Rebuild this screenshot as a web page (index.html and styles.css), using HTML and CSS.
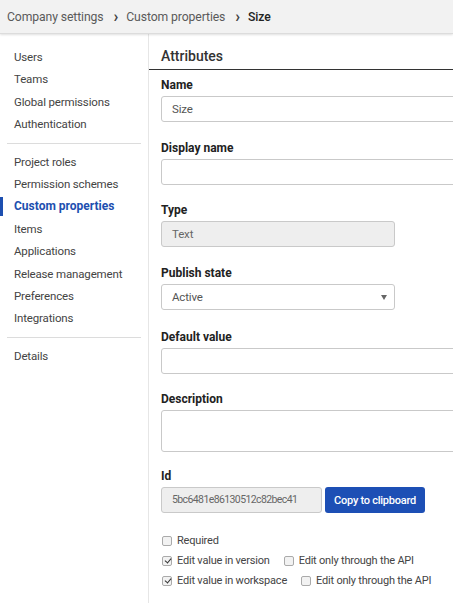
FILE: index.html
```html
<!DOCTYPE html>
<html>
<head>
<meta charset="utf-8">
<link rel="stylesheet" href="styles.css">
</head>
<body>
<header class="crumbs">
  <span class="crumb">Company settings</span>
  <span class="sep">&#x203A;</span>
  <span class="crumb">Custom properties</span>
  <span class="sep">&#x203A;</span>
  <span class="crumb current">Size</span>
</header>
<div class="layout">
  <nav class="sidebar">
    <div class="nav-group">
      <div class="nav-item">Users</div>
      <div class="nav-item">Teams</div>
      <div class="nav-item">Global permissions</div>
      <div class="nav-item">Authentication</div>
    </div>
    <div class="nav-divider"></div>
    <div class="nav-group">
      <div class="nav-item">Project roles</div>
      <div class="nav-item">Permission schemes</div>
      <div class="nav-item active">Custom properties</div>
      <div class="nav-item">Items</div>
      <div class="nav-item">Applications</div>
      <div class="nav-item">Release management</div>
      <div class="nav-item">Preferences</div>
      <div class="nav-item">Integrations</div>
    </div>
    <div class="nav-divider"></div>
    <div class="nav-group">
      <div class="nav-item">Details</div>
    </div>
  </nav>
  <main class="main">
    <h2 class="section-title">Attributes</h2>
    <div class="form">
      <div class="field">
        <label class="label">Name</label>
        <div class="input wide">Size</div>
      </div>
      <div class="field">
        <label class="label">Display name</label>
        <div class="input wide"></div>
      </div>
      <div class="field">
        <label class="label">Type</label>
        <div class="input medium disabled">Text</div>
      </div>
      <div class="field field-select">
        <label class="label">Publish state</label>
        <div class="input medium select">Active<span class="caret"></span></div>
      </div>
      <div class="field field-tight">
        <label class="label">Default value</label>
        <div class="input wide"></div>
      </div>
      <div class="field field-tight">
        <label class="label">Description</label>
        <div class="input wide textarea"></div>
      </div>
      <div class="field">
        <label class="label">Id</label>
        <div class="id-row">
          <div class="input id disabled">5bc6481e86130512c82bec41</div>
          <button class="btn">Copy to clipboard</button>
        </div>
      </div>
      <div class="checks">
        <div class="check-row">
          <span class="check"><span class="box"></span>Required</span>
        </div>
        <div class="check-row">
          <span class="check"><span class="box checked"></span>Edit value in version</span>
          <span class="check"><span class="box"></span>Edit only through the API</span>
        </div>
        <div class="check-row">
          <span class="check"><span class="box checked"></span>Edit value in workspace</span>
          <span class="check"><span class="box"></span>Edit only through the API</span>
        </div>
      </div>
    </div>
  </main>
</div>
</body>
</html>
```

FILE: styles.css
```css
* { box-sizing: border-box; }
html, body { margin: 0; padding: 0; }
body {
  font-family: Roboto, "Noto Sans", "Liberation Sans", sans-serif;
  font-size: 11.5px;
  letter-spacing: -0.15px;
  color: #333;
  background: #fff;
  width: 453px;
  overflow: hidden;
}
.crumbs {
  height: 34px;
  background: #f2f2f2;
  border-bottom: 1px solid #dcdcdc;
  box-shadow: 0 1px 2px rgba(0,0,0,0.12);
  display: flex;
  align-items: center;
  padding-left: 7px;
  font-size: 12.2px;
  letter-spacing: -0.1px;
  color: #5a5a5a;
  position: relative;
  z-index: 1;
}
.sep {
  margin: 0 8px 0 10px;
  font-size: 16px;
  font-weight: 700;
  color: #444;
  line-height: 1;
}
.crumb.current { color: #222; font-weight: 500; }
.layout {
  display: grid;
  grid-template-columns: 149px 1fr;
  min-height: 569px;
}
.sidebar {
  border-right: 1px solid #e6e6e6;
  padding-top: 12px;
}
.nav-item {
  line-height: 22.4px;
  padding-left: 14px;
  color: #444;
  position: relative;
  white-space: nowrap;
}
.nav-item.active {
  color: #1d4fb0;
  font-weight: 700;
  font-size: 12px;
  letter-spacing: 0;
}
.nav-item.active::before {
  content: "";
  position: absolute;
  left: 0;
  top: 2px;
  bottom: 2px;
  width: 3px;
  background: #1d4fb0;
}
.nav-divider {
  height: 1px;
  background: #dcdcdc;
  margin: 7px 7px 7px 7px;
}
.main { min-width: 0; }
.section-title {
  margin: 0;
  font-size: 14px;
  font-weight: 500;
  letter-spacing: 0;
  line-height: 20px;
  color: #333;
  padding: 12px 12px 3px 12px;
  border-bottom: 1px solid #333;
}
.form { padding: 7px 0 0 12px; }
.field { margin-bottom: 17.5px; }
.field-select { margin-bottom: 19.5px; }
.field-tight { margin-bottom: 16.5px; }
.label {
  display: block;
  font-weight: 700;
  font-size: 12px;
  letter-spacing: 0;
  line-height: 16px;
  color: #222;
  margin-bottom: 3px;
}
.input {
  height: 26px;
  border: 1px solid #c9c9c9;
  border-radius: 3px;
  padding: 0 10px;
  line-height: 24px;
  color: #555;
  background: #fff;
  white-space: nowrap;
}
.input.wide { width: 320px; }
.input.medium { width: 234px; }
.input.disabled { background: #eeeeee; color: #666; }
.input.textarea { height: 42px; }
.input.select { position: relative; }
.caret {
  position: absolute;
  right: 7px;
  top: 10px;
  width: 0;
  height: 0;
  border-left: 3.5px solid transparent;
  border-right: 3.5px solid transparent;
  border-top: 5px solid #666;
}
.id-row { display: flex; gap: 3px; }
.input.id {
  width: 161px;
  font-size: 10.5px;
  letter-spacing: -0.6px;
}
.btn {
  height: 26px;
  width: 100px;
  border: none;
  border-radius: 3px;
  background: #1d4fb5;
  color: #fff;
  font-family: inherit;
  font-size: 11px;
  font-weight: 500;
  letter-spacing: -0.25px;
  padding: 0;
}
.checks { padding-top: 0; padding-left: 1px; font-size: 11px; letter-spacing: -0.2px; }
.check-row {
  display: flex;
  gap: 14px;
  height: 20px;
  align-items: center;
}
.check {
  display: inline-flex;
  align-items: center;
  color: #444;
  white-space: nowrap;
}
.box {
  width: 10px;
  height: 10px;
  border: 1px solid #aaa;
  border-radius: 2px;
  background: #f2f2f2;
  margin-right: 5px;
  position: relative;
}
.box.checked::after {
  content: "";
  position: absolute;
  left: 2.5px;
  top: 0.5px;
  width: 3px;
  height: 5px;
  border: solid #333;
  border-width: 0 1.5px 1.5px 0;
  transform: rotate(40deg);
}
```
